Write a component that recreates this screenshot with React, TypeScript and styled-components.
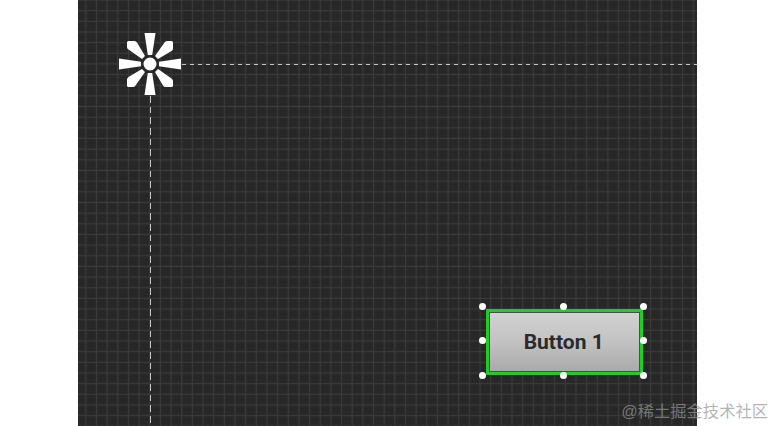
import React from "react";
import styled, { createGlobalStyle } from "styled-components";

const Global = createGlobalStyle`
  html, body { margin: 0; padding: 0; background: #fff; }
  body { width: 774px; height: 426px; overflow: hidden; position: relative; }
`;

const Page = styled.div`
  width: 774px;
  height: 426px;
  padding-left: 78px;
  box-sizing: border-box;
`;

const Canvas = styled.div`
  position: relative;
  width: 618.5px;
  height: 426px;
  overflow: hidden;
  background-color: #272727;
  background-image:
    linear-gradient(to right, #3b3b3b 1px, transparent 1px),
    linear-gradient(to bottom, #3b3b3b 1px, transparent 1px),
    linear-gradient(to right, #2a2a2a 3px, transparent 3px),
    linear-gradient(to bottom, #2a2a2a 3px, transparent 3px);
  background-size: 10.667px 10.667px;
  background-position: 7.3px 0, 0 10.2px, 6.3px 0, 0 9.2px;
`;

const GuideH = styled.div`
  position: absolute;
  left: 104px;
  right: 0;
  top: 64px;
  height: 1px;
  background: repeating-linear-gradient(to right, #c4c4c4 0 4.5px, transparent 4.5px 8px);
`;

const GuideV = styled.div`
  position: absolute;
  left: 72px;
  top: 96px;
  bottom: 0;
  width: 1px;
  background: repeating-linear-gradient(to bottom, #c4c4c4 0 6.5px, transparent 6.5px 10.67px);
`;

const Origin = styled.svg`
  position: absolute;
  left: 37px;
  top: 29px;
  width: 70px;
  height: 70px;
`;

const Node = styled.div`
  position: absolute;
  left: 401.4px;
  top: 303px;
  width: 168px;
  height: 75.6px;
  display: flex;
  flex-direction: column;
  justify-content: space-between;
`;

const HandleRow = styled.div`
  position: relative;
  z-index: 1;
  display: flex;
  justify-content: space-between;
`;

const Handle = styled.span`
  width: 7px;
  height: 7px;
  border-radius: 50%;
  background: #fff;
`;

const Selection = styled.div`
  position: absolute;
  inset: 5.5px 4px 4px 6.6px;
  box-sizing: border-box;
  border: 3px solid #1fcc2b;
  border-radius: 1px;
`;

const Face = styled.button`
  display: flex;
  align-items: center;
  justify-content: center;
  width: 100%;
  height: 100%;
  padding: 0 2px 0 0;
  border: 1px solid #4a4f4a;
  background: linear-gradient(to bottom, #d2d2d2 0%, #c2c2c2 50%, #aaaaaa 100%);
  box-sizing: border-box;
  font-family: Roboto, "Liberation Sans", sans-serif;
  font-weight: 700;
  font-size: 21px;
  color: #2b2b2b;
`;

const Watermark = styled.div`
  position: absolute;
  right: 6px;
  top: 400.5px;
  font-family: "Liberation Sans", "Noto Sans CJK SC", sans-serif;
  font-size: 16.3px;
  line-height: 20px;
  white-space: nowrap;
  color: rgba(150, 150, 150, 0.72);
`;

const straight = [0, 90, 180, 270];

export default function App() {
  return (
    <>
      <Global />
      <Page>
        <Canvas>
          <GuideH />
          <GuideV />
          <Origin viewBox="-35 -35 70 70">
            {straight.map((a) => (
              <path key={a} fill="#fff" transform={`rotate(${a})`} d="M-2.2 -9 L2.2 -9 L5.5 -31 L-5.5 -31 Z" />
            ))}
            {straight.map((a) => (
              <path
                key={`d${a}`}
                fill="#fff"
                transform={`rotate(${a})`}
                d="M-5 -8 L-8 -5 L-21.5 -14.5 Q-23 -15.5 -23 -17 L-23 -21.5 Q-23 -23 -21.5 -23 L-15.5 -23 Q-14 -23 -13 -21.5 Z"
              />
            ))}
            <circle r="7.2" fill="#fff" stroke="#272727" strokeWidth="1.4" />
          </Origin>
          <Node>
            <HandleRow><Handle /><Handle /><Handle /></HandleRow>
            <HandleRow><Handle /><Handle /></HandleRow>
            <HandleRow><Handle /><Handle /><Handle /></HandleRow>
            <Selection>
              <Face>Button 1</Face>
            </Selection>
          </Node>
        </Canvas>
      </Page>
      <Watermark>@稀土掘金技术社区</Watermark>
    </>
  );
}
